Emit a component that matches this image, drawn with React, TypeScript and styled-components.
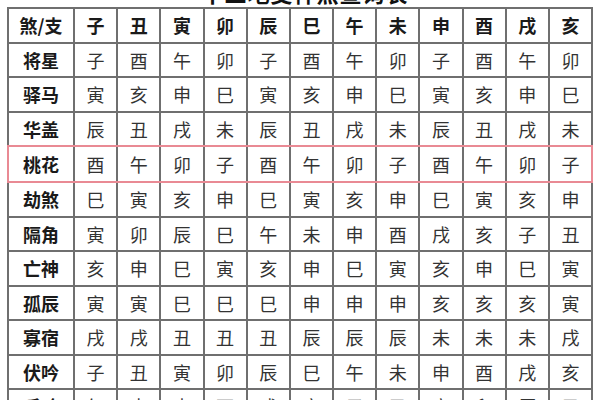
import styled, { createGlobalStyle } from "styled-components";

const GlobalStyle = createGlobalStyle`
  html, body {
    margin: 0;
    padding: 0;
    background: #ffffff;
  }
  body {
    font-family: "Noto Sans CJK SC", "Noto Sans", sans-serif;
  }
`;

const Page = styled.div`
  width: 600px;
  height: 400px;
  overflow: hidden;
  padding: 0 7px;
  box-sizing: border-box;
`;

const Title = styled.div`
  margin-top: -19px;
  height: 24px;
  line-height: 22px;
  font-size: 22px;
  font-weight: 700;
  color: #111;
  text-align: center;
  padding-left: 10px;
  margin-bottom: 2px;
  letter-spacing: 1px;
`;

const Table = styled.div`
  display: flex;
  flex-direction: column;
  gap: 2px;
  padding: 2px;
  background: #6f6f6f;
`;

const Row = styled.div<{ highlight?: boolean }>`
  position: relative;
  display: grid;
  grid-template-columns: 64px repeat(12, 1fr);
  gap: 2px;
  height: ${(props) => (props.highlight ? "34px" : "32.5px")};

  &::after {
    content: "";
    display: ${(props) => (props.highlight ? "block" : "none")};
    position: absolute;
    inset: -2px;
    border: 2px solid #e98a94;
    pointer-events: none;
  }
`;

const Cell = styled.div<{ strong?: boolean }>`
  display: flex;
  align-items: center;
  justify-content: center;
  background: #ffffff;
  font-size: 18px;
  font-weight: ${(props) => (props.strong ? 700 : 400)};
  color: ${(props) => (props.strong ? "#1a1a1a" : "#333333")};
`;

const branches = ["子", "丑", "寅", "卯", "辰", "巳", "午", "未", "申", "酉", "戌", "亥"];

const rows: { name: string; values: string; highlight?: boolean }[] = [
  { name: "将星", values: "子酉午卯子酉午卯子酉午卯" },
  { name: "驿马", values: "寅亥申巳寅亥申巳寅亥申巳" },
  { name: "华盖", values: "辰丑戌未辰丑戌未辰丑戌未" },
  { name: "桃花", values: "酉午卯子酉午卯子酉午卯子", highlight: true },
  { name: "劫煞", values: "巳寅亥申巳寅亥申巳寅亥申" },
  { name: "隔角", values: "寅卯辰巳午未申酉戌亥子丑" },
  { name: "亡神", values: "亥申巳寅亥申巳寅亥申巳寅" },
  { name: "孤辰", values: "寅寅巳巳巳申申申亥亥亥寅" },
  { name: "寡宿", values: "戌戌丑丑丑辰辰辰未未未戌" },
  { name: "伏吟", values: "子丑寅卯辰巳午未申酉戌亥" },
  { name: "反吟", values: "午未申酉戌亥子丑寅卯辰巳" },
];

export default function App() {
  return (
    <Page>
      <GlobalStyle />
      <Title>十二地支神煞查询表</Title>
      <Table>
        <Row>
          <Cell strong>煞/支</Cell>
          {branches.map((b) => (
            <Cell strong key={b}>{b}</Cell>
          ))}
        </Row>
        {rows.map((row) => (
          <Row key={row.name} highlight={row.highlight}>
            <Cell strong>{row.name}</Cell>
            {row.values.split("").map((v, i) => (
              <Cell key={i}>{v}</Cell>
            ))}
          </Row>
        ))}
      </Table>
    </Page>
  );
}
